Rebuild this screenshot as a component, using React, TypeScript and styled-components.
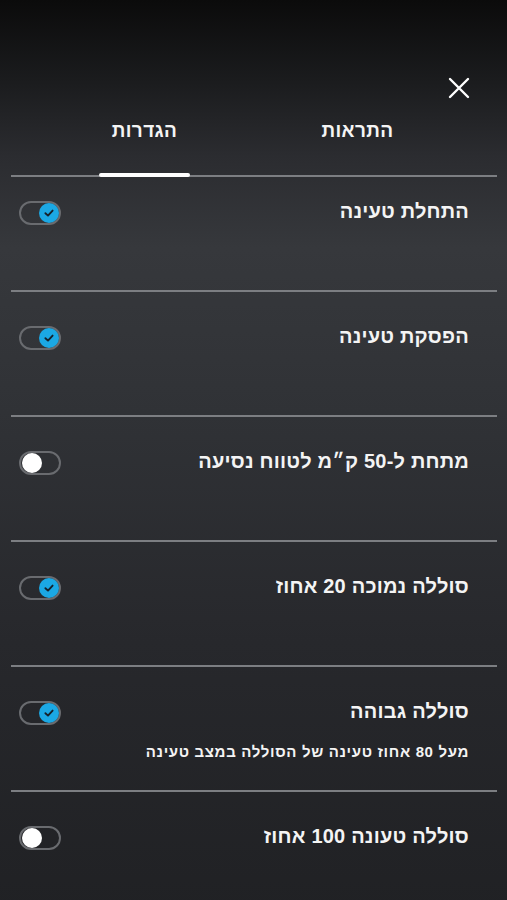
import React, { useState } from "react";
import styled, { createGlobalStyle } from "styled-components";

const GlobalStyle = createGlobalStyle`
  html, body {
    margin: 0;
    padding: 0;
  }
  body {
    background: #222326;
    font-family: "Liberation Sans", "DejaVu Sans", Arial, sans-serif;
  }
`;

const Screen = styled.div`
  direction: rtl;
  min-height: 900px;
  box-sizing: border-box;
  padding-top: 76px;
  color: #f4f4f4;
  background: linear-gradient(
    180deg,
    #0b0b0b 0%,
    #1b1c1e 9%,
    #2b2c30 17%,
    #36383c 27%,
    #303236 45%,
    #27282c 70%,
    #202124 100%
  );
`;

const TopBar = styled.div`
  display: flex;
  justify-content: flex-start;
  padding-right: 36px;
  height: 24px;
`;

const CloseButton = styled.button`
  width: 24px;
  height: 24px;
  padding: 0;
  border: none;
  background: none;
  cursor: pointer;
  display: flex;
  align-items: center;
  justify-content: center;
`;

const TabBar = styled.div`
  display: flex;
  gap: 122px;
  margin: 19px 10px 0 11px;
  padding-right: 94px;
  border-bottom: 2px solid #7c7e82;
`;

const Tab = styled.button<{ $active?: boolean }>`
  position: relative;
  width: 91px;
  padding: 0 0 32px;
  border: none;
  background: none;
  color: #f4f4f4;
  font-family: inherit;
  font-size: 19px;
  font-weight: bold;
  letter-spacing: 0.4px;
  line-height: 24px;
  cursor: pointer;

  &::after {
    content: "";
    display: ${({ $active }) => ($active ? "block" : "none")};
    position: absolute;
    left: 0;
    right: 0;
    bottom: -2px;
    height: 4px;
    border-radius: 2px;
    background: #ffffff;
  }
`;

const List = styled.div`
  margin: 0 10px 0 11px;
`;

const Row = styled.div`
  display: flex;
  justify-content: space-between;
  align-items: flex-start;
  min-height: 125px;
  box-sizing: border-box;
  padding: 32px 28px 0 8px;
  border-bottom: 2px solid #7c7e82;

  &:first-child {
    padding-top: 22px;
    min-height: 115px;
  }

  &:last-child {
    border-bottom: none;
  }
`;

const TextBlock = styled.div`
  display: flex;
  flex-direction: column;
  gap: 20px;
`;

const Title = styled.div`
  font-size: 20px;
  font-weight: bold;
  letter-spacing: 0.2px;
  line-height: 24px;
`;

const Subtitle = styled.div`
  font-size: 15px;
  font-weight: bold;
  letter-spacing: 0.65px;
  line-height: 18px;
`;

const Switch = styled.button<{ $on: boolean }>`
  position: relative;
  flex-shrink: 0;
  width: 42px;
  height: 24px;
  margin-top: 2px;
  padding: 0;
  box-sizing: border-box;
  border: 2px solid #696b6f;
  border-radius: 12px;
  background: transparent;
  cursor: pointer;
`;

const Knob = styled.span<{ $on: boolean }>`
  position: absolute;
  top: 0;
  left: ${({ $on }) => ($on ? "18px" : "1px")};
  width: 20px;
  height: 20px;
  border-radius: 50%;
  background: ${({ $on }) => ($on ? "#1ba8e4" : "#ffffff")};
  display: flex;
  align-items: center;
  justify-content: center;
`;

const CheckIcon = () => (
  <svg width="12" height="12" viewBox="0 0 12 12">
    <path
      d="M2.4 6.2 L5 8.6 L9.6 3.6"
      fill="none"
      stroke="#15222c"
      strokeWidth="1.9"
      strokeLinecap="round"
      strokeLinejoin="round"
    />
  </svg>
);

const CloseIcon = () => (
  <svg width="22" height="22" viewBox="0 0 22 22">
    <path
      d="M2 2 L20 20 M20 2 L2 20"
      stroke="#ffffff"
      strokeWidth="2.4"
      strokeLinecap="round"
    />
  </svg>
);

type Setting = { id: string; title: string; subtitle?: string; on: boolean };

const initialSettings: Setting[] = [
  { id: "start", title: "התחלת טעינה", on: true },
  { id: "stop", title: "הפסקת טעינה", on: true },
  { id: "range", title: "מתחת ל-50 ק״מ לטווח נסיעה", on: false },
  { id: "low", title: "סוללה נמוכה 20 אחוז", on: true },
  {
    id: "high",
    title: "סוללה גבוהה",
    subtitle: "מעל 80 אחוז טעינה של הסוללה במצב טעינה",
    on: true,
  },
  { id: "full", title: "סוללה טעונה 100 אחוז", on: false },
];

export default function App() {
  const [settings, setSettings] = useState(initialSettings);
  const [tab, setTab] = useState<"alerts" | "settings">("settings");

  const toggle = (id: string) =>
    setSettings((prev) =>
      prev.map((s) => (s.id === id ? { ...s, on: !s.on } : s))
    );

  return (
    <>
      <GlobalStyle />
      <Screen>
        <TopBar>
          <CloseButton aria-label="סגור">
            <CloseIcon />
          </CloseButton>
        </TopBar>
        <TabBar>
          <Tab $active={tab === "alerts"} onClick={() => setTab("alerts")}>
            התראות
          </Tab>
          <Tab $active={tab === "settings"} onClick={() => setTab("settings")}>
            הגדרות
          </Tab>
        </TabBar>
        <List>
          {settings.map((s) => (
            <Row key={s.id}>
              <TextBlock>
                <Title>{s.title}</Title>
                {s.subtitle && <Subtitle>{s.subtitle}</Subtitle>}
              </TextBlock>
              <Switch $on={s.on} onClick={() => toggle(s.id)}>
                <Knob $on={s.on}>{s.on && <CheckIcon />}</Knob>
              </Switch>
            </Row>
          ))}
        </List>
      </Screen>
    </>
  );
}
